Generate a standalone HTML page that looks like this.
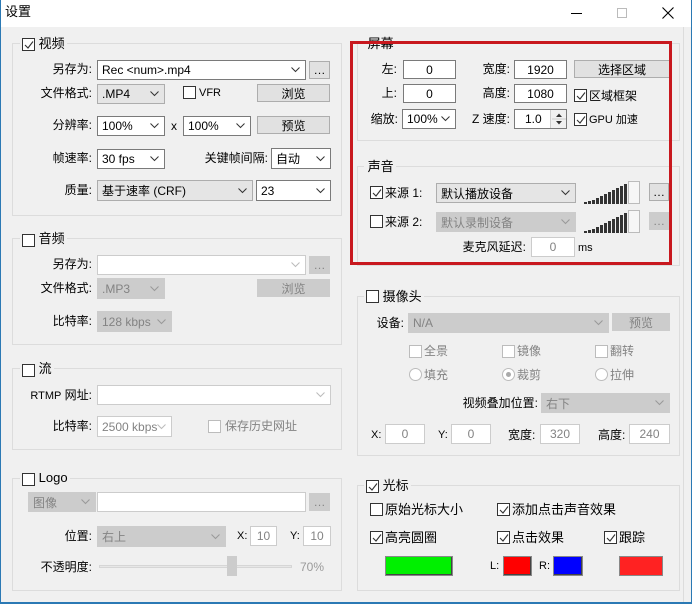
<!DOCTYPE html>
<html><head><meta charset="utf-8"><style>
*{box-sizing:border-box;margin:0;padding:0}
body{width:692px;height:604px;overflow:hidden;background:#f0f0f0;font-family:"Liberation Sans","Noto Sans CJK SC",sans-serif;font-size:12px;color:#000;position:relative}
.a{position:absolute}
.lb{position:absolute;white-space:nowrap;line-height:16px}
.r{text-align:right}
.cb{position:absolute;display:flex;align-items:center;padding-left:4px;background:#fff;border:1px solid #7a7a7a;white-space:nowrap;overflow:hidden}
.cb.g{background:#e5e5e5;border-color:#adadad}
.cb.d{background:#ccc;border-color:#ccc;color:#838383}
.cb.dw{background:#fff;border-color:#ccc;color:#838383}
.cb svg{position:absolute;right:5px;top:50%;margin-top:-3px}
.tb{position:absolute;display:flex;align-items:center;justify-content:center;background:#fff;border:1px solid #7a7a7a}
.tb.d{border-color:#ccc;color:#838383}
.bt{position:absolute;display:flex;align-items:center;justify-content:center;background:#e1e1e1;border:1px solid #adadad}
.bt.d{background:#ccc;border-color:#ccc;color:#838383}
.ck{position:absolute;width:13px;height:13px;border:1px solid #333;background:#fff}
.ck.d{border-color:#bcbcbc}
.ck svg{position:absolute;left:1px;top:1px}
.rd{position:absolute;width:13px;height:13px;border:1px solid #bcbcbc;border-radius:50%;background:#fff}
.gb{position:absolute;border:1px solid #dcdcdc}
.gt{position:absolute;background:#f0f0f0;padding:0 2px 0 0;line-height:16px;white-space:nowrap;font-size:13px}
</style></head><body>
<!-- title bar -->
<div class="a" style="left:0;top:0;width:692px;height:27px;background:#fff"></div>
<div class="lb" style="left:5px;top:4px;font-size:13px">设置</div>
<div class="a" style="left:571px;top:13px;width:11px;height:1px;background:#000"></div>
<div class="a" style="left:617px;top:8px;width:10px;height:10px;border:1px solid #bbb"></div>
<svg class="a" style="left:662px;top:7px" width="12" height="12"><path d="M0.5 0.5L11.5 11.5M11.5 0.5L0.5 11.5" stroke="#000" stroke-width="1.1"/></svg>
<!-- window borders -->
<div class="a" style="left:0;top:0;width:1px;height:604px;background:#2b79b4"></div>
<div class="a" style="left:691px;top:0;width:1px;height:604px;background:#2b79b4"></div>
<div class="a" style="left:0;top:602px;width:692px;height:2px;background:#2b79b4"></div>
<div class="a" style="left:683px;top:27px;width:1px;height:575px;background:#dcdcdc"></div>

<!-- VIDEO -->
<div class="gb" style="left:12px;top:43px;width:330px;height:173px"></div>
<div class="gt" style="left:20px;top:36px">&nbsp;<span style="padding-left:15px">视频</span></div>
<div class="ck" style="left:22px;top:38px"><svg width="10" height="10"><path d="M1 5L4 8L9 1.5" stroke="#333" fill="none" stroke-width="1.1"/></svg></div>
<div class="lb r" style="left:20px;width:72px;top:61px">另存为:</div>
<div class="cb" style="left:97px;top:60px;width:209px;height:20px">Rec &lt;num&gt;.mp4<svg width="9" height="6"><path d="M0.5 0.5L4.5 4.5L8.5 0.5" stroke="#333" fill="none"/></svg></div>
<div class="bt" style="left:309px;top:61px;width:21px;height:18px">…</div>
<div class="lb r" style="left:20px;width:72px;top:85px">文件格式:</div>
<div class="cb g" style="left:97px;top:84px;width:68px;height:20px">.MP4<svg width="9" height="6"><path d="M0.5 0.5L4.5 4.5L8.5 0.5" stroke="#333" fill="none"/></svg></div>
<div class="ck" style="left:183px;top:86px"></div>
<div class="lb" style="left:199px;top:85px;font-size:11px">VFR</div>
<div class="bt" style="left:257px;top:84px;width:73px;height:18px">浏览</div>
<div class="lb r" style="left:20px;width:72px;top:117px">分辨率:</div>
<div class="cb" style="left:97px;top:116px;width:68px;height:20px">100%<svg width="9" height="6"><path d="M0.5 0.5L4.5 4.5L8.5 0.5" stroke="#333" fill="none"/></svg></div>
<div class="lb" style="left:171px;top:118px">x</div>
<div class="cb" style="left:183px;top:116px;width:68px;height:20px">100%<svg width="9" height="6"><path d="M0.5 0.5L4.5 4.5L8.5 0.5" stroke="#333" fill="none"/></svg></div>
<div class="bt" style="left:257px;top:116px;width:73px;height:18px">预览</div>
<div class="lb r" style="left:20px;width:72px;top:150px">帧速率:</div>
<div class="cb" style="left:97px;top:149px;width:68px;height:20px">30 fps<svg width="9" height="6"><path d="M0.5 0.5L4.5 4.5L8.5 0.5" stroke="#333" fill="none"/></svg></div>
<div class="lb r" style="left:180px;width:88px;top:150px">关键帧间隔:</div>
<div class="cb" style="left:271px;top:148px;width:60px;height:21px">自动<svg width="9" height="6"><path d="M0.5 0.5L4.5 4.5L8.5 0.5" stroke="#333" fill="none"/></svg></div>
<div class="lb r" style="left:20px;width:72px;top:182px">质量:</div>
<div class="cb g" style="left:97px;top:180px;width:156px;height:21px">基于速率 (CRF)<svg width="9" height="6"><path d="M0.5 0.5L4.5 4.5L8.5 0.5" stroke="#333" fill="none"/></svg></div>
<div class="cb" style="left:256px;top:180px;width:75px;height:21px">23<svg width="9" height="6"><path d="M0.5 0.5L4.5 4.5L8.5 0.5" stroke="#333" fill="none"/></svg></div>

<!-- AUDIO -->
<div class="gb" style="left:12px;top:238px;width:330px;height:107px"></div>
<div class="gt" style="left:20px;top:231px">&nbsp;<span style="padding-left:15px">音频</span></div>
<div class="ck" style="left:22px;top:234px"></div>
<div class="lb r" style="left:20px;width:72px;top:256px">另存为:</div>
<div class="cb dw" style="left:97px;top:255px;width:209px;height:20px"><svg width="9" height="6"><path d="M0.5 0.5L4.5 4.5L8.5 0.5" stroke="#bbb" fill="none"/></svg></div>
<div class="bt d" style="left:309px;top:256px;width:21px;height:18px">…</div>
<div class="lb r" style="left:20px;width:72px;top:280px">文件格式:</div>
<div class="cb d" style="left:97px;top:278px;width:68px;height:21px">.MP3<svg width="9" height="6"><path d="M0.5 0.5L4.5 4.5L8.5 0.5" stroke="#999" fill="none"/></svg></div>
<div class="bt d" style="left:257px;top:279px;width:73px;height:18px">浏览</div>
<div class="lb r" style="left:20px;width:72px;top:313px">比特率:</div>
<div class="cb d" style="left:97px;top:311px;width:75px;height:21px">128 kbps<svg width="9" height="6"><path d="M0.5 0.5L4.5 4.5L8.5 0.5" stroke="#999" fill="none"/></svg></div>

<!-- STREAM -->
<div class="gb" style="left:12px;top:368px;width:330px;height:82px"></div>
<div class="gt" style="left:20px;top:361px">&nbsp;<span style="padding-left:15px">流</span></div>
<div class="ck" style="left:22px;top:364px"></div>
<div class="lb r" style="left:10px;width:82px;top:387px"><span style="font-size:11px">RTMP</span> 网址:</div>
<div class="cb dw" style="left:97px;top:385px;width:234px;height:20px"><svg width="9" height="6"><path d="M0.5 0.5L4.5 4.5L8.5 0.5" stroke="#bbb" fill="none"/></svg></div>
<div class="lb r" style="left:20px;width:72px;top:418px">比特率:</div>
<div class="cb dw" style="left:97px;top:416px;width:75px;height:21px">2500 kbps<svg width="9" height="6"><path d="M0.5 0.5L4.5 4.5L8.5 0.5" stroke="#bbb" fill="none"/></svg></div>
<div class="ck d" style="left:208px;top:420px"></div>
<div class="lb" style="left:225px;top:418px;color:#838383">保存历史网址</div>

<!-- LOGO -->
<div class="gb" style="left:12px;top:478px;width:330px;height:113px"></div>
<div class="gt" style="left:20px;top:470px">&nbsp;<span style="padding-left:15px">Logo</span></div>
<div class="ck" style="left:22px;top:473px"></div>
<div class="cb d" style="left:28px;top:492px;width:68px;height:20px">图像<svg width="9" height="6"><path d="M0.5 0.5L4.5 4.5L8.5 0.5" stroke="#999" fill="none"/></svg></div>
<div class="tb d" style="left:97px;top:492px;width:209px;height:20px"></div>
<div class="bt d" style="left:309px;top:493px;width:21px;height:18px">…</div>
<div class="lb r" style="left:20px;width:72px;top:528px">位置:</div>
<div class="cb d" style="left:97px;top:526px;width:129px;height:21px">右上<svg width="9" height="6"><path d="M0.5 0.5L4.5 4.5L8.5 0.5" stroke="#999" fill="none"/></svg></div>
<div class="lb" style="left:237px;top:528px;font-size:11px">X:</div>
<div class="tb d" style="left:250px;top:526px;width:27px;height:20px">10</div>
<div class="lb" style="left:290px;top:528px;font-size:11px">Y:</div>
<div class="tb d" style="left:303px;top:526px;width:28px;height:20px">10</div>
<div class="lb r" style="left:10px;width:82px;top:559px">不透明度:</div>
<div class="a" style="left:99px;top:565px;width:193px;height:3px;background:#e7e7e7;border:1px solid #d6d6d6"></div>
<div class="a" style="left:227px;top:556px;width:10px;height:20px;background:#ccc"></div>
<div class="lb" style="left:300px;top:559px;color:#9a9a9a">70%</div>

<!-- SCREEN -->
<div class="gb" style="left:357px;top:43px;width:323px;height:98px"></div>
<div class="gt" style="left:364px;top:36px">&nbsp;屏幕</div>
<div class="lb r" style="left:360px;width:37px;top:61px">左:</div>
<div class="tb" style="left:403px;top:60px;width:53px;height:19px">0</div>
<div class="lb r" style="left:460px;width:50px;top:61px">宽度:</div>
<div class="tb" style="left:514px;top:60px;width:53px;height:19px">1920</div>
<div class="bt" style="left:574px;top:60px;width:96px;height:18px">选择区域</div>
<div class="lb r" style="left:360px;width:37px;top:85px">上:</div>
<div class="tb" style="left:403px;top:84px;width:53px;height:19px">0</div>
<div class="lb r" style="left:460px;width:50px;top:85px">高度:</div>
<div class="tb" style="left:514px;top:84px;width:53px;height:19px">1080</div>
<div class="ck" style="left:574px;top:89px"><svg width="10" height="10"><path d="M1 5L4 8L9 1.5" stroke="#333" fill="none" stroke-width="1.1"/></svg></div>
<div class="lb" style="left:589px;top:88px">区域框架</div>
<div class="lb r" style="left:360px;width:38px;top:111px">缩放:</div>
<div class="cb" style="left:402px;top:109px;width:54px;height:20px">100%<svg width="9" height="6"><path d="M0.5 0.5L4.5 4.5L8.5 0.5" stroke="#333" fill="none"/></svg></div>
<div class="lb r" style="left:460px;width:50px;top:111px">Z 速度:</div>
<div class="tb" style="left:514px;top:109px;width:53px;height:20px;justify-content:flex-start;padding-left:10px">1.0</div>
<div class="a" style="left:550px;top:110px;width:16px;height:18px;background:#f0f0f0;border-left:1px solid #ccc"><svg width="16" height="18"><path d="M5 7L8 3.5L11 7Z M5 11L8 14.5L11 11Z" fill="#333"/><path d="M1 9H15" stroke="#ccc"/></svg></div>
<div class="ck" style="left:574px;top:113px"><svg width="10" height="10"><path d="M1 5L4 8L9 1.5" stroke="#333" fill="none" stroke-width="1.1"/></svg></div>
<div class="lb" style="left:589px;top:112px;font-size:11px">GPU 加速</div>

<!-- SOUND -->
<div class="gb" style="left:357px;top:166px;width:323px;height:100px"></div>
<div class="gt" style="left:364px;top:159px">&nbsp;声音</div>
<div class="ck" style="left:370px;top:186px"><svg width="10" height="10"><path d="M1 5L4 8L9 1.5" stroke="#333" fill="none" stroke-width="1.1"/></svg></div>
<div class="lb" style="left:385px;top:185px">来源 1:</div>
<div class="cb g" style="left:436px;top:183px;width:140px;height:20px">默认播放设备<svg width="9" height="6"><path d="M0.5 0.5L4.5 4.5L8.5 0.5" stroke="#333" fill="none"/></svg></div>
<svg class="a" style="left:584px;top:181px" width="58" height="24"><g fill="#333"><rect x="0" y="21" width="3" height="2"/><rect x="4" y="20" width="3" height="3"/><rect x="8" y="19" width="3" height="4"/><rect x="12" y="17" width="3" height="6"/><rect x="16" y="15" width="3" height="8"/><rect x="20" y="13" width="3" height="10"/><rect x="24" y="11" width="3" height="12"/><rect x="28" y="9" width="3" height="14"/><rect x="32" y="7" width="3" height="16"/><rect x="36" y="5" width="3" height="18"/><rect x="40" y="3" width="3" height="20"/></g><rect x="44.5" y="0.5" width="11" height="22" fill="#f6f6f6" stroke="#bbb"/></svg>
<div class="bt" style="left:649px;top:183px;width:20px;height:18px">…</div>
<div class="ck" style="left:370px;top:215px"></div>
<div class="lb" style="left:385px;top:214px">来源 2:</div>
<div class="cb d" style="left:436px;top:212px;width:140px;height:20px">默认录制设备<svg width="9" height="6"><path d="M0.5 0.5L4.5 4.5L8.5 0.5" stroke="#999" fill="none"/></svg></div>
<svg class="a" style="left:584px;top:210px" width="58" height="24"><g fill="#333"><rect x="0" y="21" width="3" height="2"/><rect x="4" y="20" width="3" height="3"/><rect x="8" y="19" width="3" height="4"/><rect x="12" y="17" width="3" height="6"/><rect x="16" y="15" width="3" height="8"/><rect x="20" y="13" width="3" height="10"/><rect x="24" y="11" width="3" height="12"/><rect x="28" y="9" width="3" height="14"/><rect x="32" y="7" width="3" height="16"/><rect x="36" y="5" width="3" height="18"/><rect x="40" y="3" width="3" height="20"/></g><rect x="44.5" y="0.5" width="11" height="22" fill="#f6f6f6" stroke="#bbb"/></svg>
<div class="bt d" style="left:649px;top:212px;width:20px;height:18px">…</div>
<div class="lb r" style="left:440px;width:86px;top:239px">麦克风延迟:</div>
<div class="tb d" style="left:531px;top:237px;width:44px;height:20px">0</div>
<div class="lb" style="left:578px;top:240px;font-size:11px">ms</div>

<!-- red highlight -->
<div class="a" style="left:350px;top:41px;width:322px;height:224px;border:3px solid #c8181e"></div>

<!-- CAMERA -->
<div class="gb" style="left:357px;top:296px;width:323px;height:160px"></div>
<div class="gt" style="left:364px;top:289px">&nbsp;<span style="padding-left:15px">摄像头</span></div>
<div class="ck" style="left:366px;top:290px"></div>
<div class="lb r" style="left:360px;width:44px;top:315px">设备:</div>
<div class="cb d" style="left:408px;top:313px;width:201px;height:20px">N/A<svg width="9" height="6"><path d="M0.5 0.5L4.5 4.5L8.5 0.5" stroke="#999" fill="none"/></svg></div>
<div class="bt d" style="left:612px;top:313px;width:58px;height:18px">预览</div>
<div class="ck d" style="left:409px;top:345px"></div><div class="lb" style="left:424px;top:343px;color:#838383">全景</div>
<div class="ck d" style="left:502px;top:345px"></div><div class="lb" style="left:517px;top:343px;color:#838383">镜像</div>
<div class="ck d" style="left:595px;top:345px"></div><div class="lb" style="left:610px;top:343px;color:#838383">翻转</div>
<div class="rd" style="left:409px;top:368px"></div><div class="lb" style="left:424px;top:367px;color:#838383">填充</div>
<div class="rd" style="left:502px;top:368px"><div class="a" style="left:3px;top:3px;width:5px;height:5px;border-radius:50%;background:#aaa"></div></div><div class="lb" style="left:517px;top:367px;color:#838383">裁剪</div>
<div class="rd" style="left:595px;top:368px"></div><div class="lb" style="left:610px;top:367px;color:#838383">拉伸</div>
<div class="lb r" style="left:430px;width:108px;top:395px">视频叠加位置:</div>
<div class="cb d" style="left:541px;top:393px;width:129px;height:20px">右下<svg width="9" height="6"><path d="M0.5 0.5L4.5 4.5L8.5 0.5" stroke="#999" fill="none"/></svg></div>
<div class="lb" style="left:371px;top:427px;font-size:11px">X:</div>
<div class="tb d" style="left:385px;top:424px;width:40px;height:20px">0</div>
<div class="lb" style="left:438px;top:427px;font-size:11px">Y:</div>
<div class="tb d" style="left:451px;top:424px;width:40px;height:20px">0</div>
<div class="lb" style="left:508px;top:427px">宽度:</div>
<div class="tb d" style="left:540px;top:424px;width:40px;height:20px">320</div>
<div class="lb" style="left:598px;top:427px">高度:</div>
<div class="tb d" style="left:629px;top:424px;width:41px;height:20px">240</div>

<!-- CURSOR -->
<div class="gb" style="left:357px;top:485px;width:323px;height:106px"></div>
<div class="gt" style="left:364px;top:478px">&nbsp;<span style="padding-left:15px">光标</span></div>
<div class="ck" style="left:366px;top:480px"><svg width="10" height="10"><path d="M1 5L4 8L9 1.5" stroke="#333" fill="none" stroke-width="1.1"/></svg></div>
<div class="ck" style="left:370px;top:503px"></div><div class="lb" style="left:385px;top:502px;font-size:13px">原始光标大小</div>
<div class="ck" style="left:497px;top:503px"><svg width="10" height="10"><path d="M1 5L4 8L9 1.5" stroke="#333" fill="none" stroke-width="1.1"/></svg></div><div class="lb" style="left:512px;top:502px;font-size:13px">添加点击声音效果</div>
<div class="ck" style="left:370px;top:531px"><svg width="10" height="10"><path d="M1 5L4 8L9 1.5" stroke="#333" fill="none" stroke-width="1.1"/></svg></div><div class="lb" style="left:385px;top:530px;font-size:13px">高亮圆圈</div>
<div class="ck" style="left:497px;top:531px"><svg width="10" height="10"><path d="M1 5L4 8L9 1.5" stroke="#333" fill="none" stroke-width="1.1"/></svg></div><div class="lb" style="left:512px;top:530px;font-size:13px">点击效果</div>
<div class="ck" style="left:604px;top:531px"><svg width="10" height="10"><path d="M1 5L4 8L9 1.5" stroke="#333" fill="none" stroke-width="1.1"/></svg></div><div class="lb" style="left:619px;top:530px;font-size:13px">跟踪</div>
<div class="a" style="left:385px;top:556px;width:68px;height:20px;background:#00f000;border:1px solid #888;box-shadow:inset -1px -1px 0 #444"></div>
<div class="lb" style="left:490px;top:558px;font-size:11px">L:</div>
<div class="a" style="left:503px;top:556px;width:29px;height:20px;background:#f00;border:1px solid #888;box-shadow:inset -1px -1px 0 #444"></div>
<div class="lb" style="left:539px;top:558px;font-size:11px">R:</div>
<div class="a" style="left:553px;top:556px;width:30px;height:20px;background:#00f;border:1px solid #888;box-shadow:inset -1px -1px 0 #444"></div>
<div class="a" style="left:619px;top:556px;width:44px;height:20px;background:#f22;border:1px solid #888"></div>
</body></html>
